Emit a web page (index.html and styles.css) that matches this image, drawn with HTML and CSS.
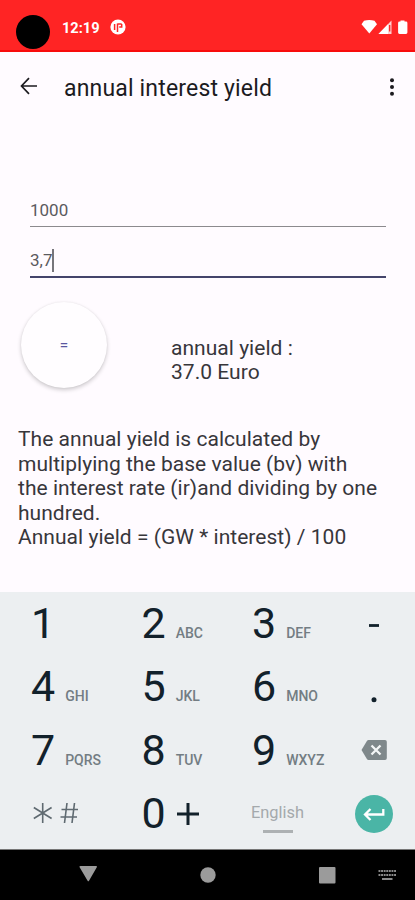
FILE: index.html
```
<!DOCTYPE html>
<html lang="en">
<head>
    <meta charset="UTF-8">
    <meta name="viewport" content="width=device-width, initial-scale=1.0">
    <title>annual interest yield</title>
    <link rel="stylesheet" href="styles.css">
</head>
<body>
    <div class="status-bar">
        <span class="camera"></span>
        <span class="clock">12:19</span>
        <svg class="app-icon" width="16" height="16" viewBox="0 0 16 16">
            <circle cx="8" cy="8" r="7.600" fill="#fff"/>
            <path d="M4.600 5v6M7.500 13V4.500M7.500 5h4.200M9.200 8h2.500V5" fill="none" stroke="#ff2424" stroke-width="1.500"/>
        </svg>
        <svg class="signals" width="48" height="16" viewBox="0 0 48 16">
            <path d="M.5 4.200L3 .8Q8.300-.8 13.500.8L16 4.200L8.300 13.500z" fill="#fff"/>
            <path d="M30.500.5v13.500H17.500z" fill="#ffd0d0"/>
            <path d="M27 4.200V14h-9.500z" fill="#fff"/>
            <path d="M28.700 5v6.500" stroke="#ff2424" stroke-width="1.300"/>
            <path d="M39.500 1.500V.5h4v1h1.500q1.400 0 1.400 1.400V12.500q0 1.400-1.400 1.400h-6.500q-1.400 0-1.400-1.400V2.900q0-1.400 1.400-1.400z" fill="#fff"/>
        </svg>
    </div>

    <header>
        <svg class="back" width="18" height="18" viewBox="0 0 18 18">
            <path d="M17 9H1.500M9 1.200L1.500 9L9 16.800" fill="none" stroke="#1c1b1f" stroke-width="1.700"/>
        </svg>
        <h1>annual interest yield</h1>
        <svg class="more" width="6" height="18" viewBox="0 0 6 18">
            <g fill="#1c1b1f">
                <circle cx="3" cy="2.200" r="2"/>
                <circle cx="3" cy="9" r="2"/>
                <circle cx="3" cy="15.800" r="2"/>
            </g>
        </svg>
    </header>

    <main>
        <div class="field">1000</div>
        <div class="field active">3,7<span class="caret"></span></div>

        <div class="result-row">
            <button class="equals">=</button>
            <p class="result">annual yield :<br>37.0 Euro</p>
        </div>

        <p class="info">The annual yield is calculated by<br>multiplying the base value (bv) with<br>the interest rate (ir)and dividing by one<br>hundred.<br>Annual yield = (GW * interest) / 100</p>
    </main>

    <div class="keyboard">
        <div class="key">1</div>
        <div class="key">2<small>ABC</small></div>
        <div class="key">3<small>DEF</small></div>
        <div class="key side">
            <svg width="12" height="40" viewBox="0 0 12 40"><path d="M1 21.500h10" stroke="#12212b" stroke-width="2.800"/></svg>
        </div>

        <div class="key">4<small>GHI</small></div>
        <div class="key">5<small>JKL</small></div>
        <div class="key">6<small>MNO</small></div>
        <div class="key side">
            <svg width="12" height="40" viewBox="0 0 12 40"><circle cx="6" cy="32.800" r="2.500" fill="#12212b"/></svg>
        </div>

        <div class="key">7<small>PQRS</small></div>
        <div class="key">8<small>TUV</small></div>
        <div class="key">9<small>WXYZ</small></div>
        <div class="key side">
            <svg width="26" height="20" viewBox="0 0 26 20">
                <path d="M7.500 0H24q1.800 0 1.800 1.800v16.400q0 1.800-1.800 1.800H7.500q-1 0-1.600-.900L.500 10L5.900.900Q6.500 0 7.500 0z" fill="#7f888b"/>
                <path d="M10.500 5.500l9 9M19.500 5.500l-9 9" stroke="#f4f6f7" stroke-width="2.300"/>
            </svg>
        </div>

        <div class="key symbols">
            <svg width="46" height="22" viewBox="0 0 46 22">
                <g fill="none" stroke="#5f6a71" stroke-width="1.600">
                    <path d="M9.700 1v20M.8 5.500l17.800 11M18.600 5.500L.8 16.500"/>
                    <path d="M34 1l-2.500 20M41.500 1l-2.500 20M28.500 7.500h16.500M27.500 15h16.500"/>
                </g>
            </svg>
        </div>
        <div class="key">0<svg class="plus" width="22" height="22" viewBox="0 0 22 22"><path d="M11 0v22M0 11h22" stroke="#12212b" stroke-width="3"/></svg></div>
        <div class="key language"><span>English</span></div>
        <div class="key side">
            <svg width="38" height="38" viewBox="0 0 38 38">
                <circle cx="19" cy="19" r="19" fill="#4ab5a6"/>
                <path d="M28.300 14v5.500H10.500M15.500 14l-5.500 5.500l5.500 5.500" fill="none" stroke="#fff" stroke-width="2.300"/>
            </svg>
        </div>
    </div>

    <nav>
        <svg width="415" height="50" viewBox="0 0 415 50">
            <g fill="#9b9b9b">
                <path d="M80.500 16h15.500q1.500 0 .8 1.300L89 30.800q-.7 1-1.400 0L79.600 17.300q-.6-1.300.9-1.300z"/>
                <circle cx="208" cy="25" r="7.700"/>
                <rect x="319" y="17" width="16.500" height="16.500" rx="1"/>
            </g>
            <g stroke="#8a8a8a" fill="none">
                <path d="M378.500 21h17.500M378.500 25h17.500" stroke-width="2.200" stroke-dasharray="1.900 .7"/>
                <path d="M382 29h10.500" stroke-width="2"/>
            </g>
        </svg>
    </nav>
</body>
</html>
```
FILE: styles.css
```
/* General Styles */
* {
    box-sizing: border-box;
}

body {
    font-family: Roboto, sans-serif;
    margin: 0;
    padding: 0;
    height: 900px;
    display: flex;
    flex-direction: column;
    overflow: hidden;
    background: #fffbff;
    color: #37363b;
}

h1, p {
    margin: 0;
    font-weight: normal;
}

svg {
    display: block;
    flex: none;
}

.status-bar {
    display: flex;
    align-items: flex-start;
    height: 52px;
    padding-left: 16px;
    background: #ff2424;
    border-bottom: 2px solid #f80c0c;
    color: #fff;
}

.camera {
    width: 34px;
    height: 34px;
    margin-top: 15px;
    border-radius: 50%;
    background: #000;
}

.clock {
    width: 48px;
    margin: 19px 0 0 12px;
    font-size: 14.6px;
    line-height: 18px;
    font-weight: 700;
}

.app-icon {
    margin-top: 19px;
}

.signals {
    margin: 20px 6px 0 auto;
}

/* Title bar */
header {
    display: flex;
    align-items: center;
    height: 70px;
    padding: 0 20px;
    color: #1c1b1f;
}

.back {
    margin-top: -2px;
}

header h1 {
    margin-left: 26px;
    font-size: 23px;
    line-height: 28px;
    letter-spacing: 0.17px;
    padding-top: 4px;
}

.more {
    margin-left: auto;
}

/* Input fields */
main {
    flex: 1;
    padding-top: 76px;
}

.field {
    display: flex;
    align-items: center;
    height: 29px;
    margin: 0 29px 0 30px;
    padding-bottom: 5px;
    border-bottom: 1.5px solid #8c8a8e;
    font-size: 17px;
    line-height: 22px;
    color: #5b5a5e;
}

.field.active {
    height: 31px;
    margin-top: 20px;
    padding-bottom: 3px;
    border-bottom: 2px solid #44446b;
}

.caret {
    width: 2px;
    height: 23px;
    background: #77767b;
}

.result-row {
    display: flex;
    margin-top: 24px;
    padding-left: 21px;
}

.equals {
    width: 86px;
    height: 86px;
    border: none;
    border-radius: 50%;
    background: #fffdff;
    box-shadow: 0 2px 4px rgba(0, 0, 0, 0.2), 0 0 2px rgba(0, 0, 0, 0.06);
    color: #5a57a0;
    font-family: inherit;
    font-size: 15px;
    font-weight: 500;
}

.result {
    margin: 33.5px 0 0 64px;
}

.result,
.info {
    font-size: 21px;
    line-height: 24.6px;
    letter-spacing: 0.03px;
}

.info {
    margin: 39px 0 0 18px;
    white-space: nowrap;
}

/* Number keyboard */
.keyboard {
    display: grid;
    grid-template-columns: 110.5px 110.5px 110.5px 1fr;
    grid-template-rows: repeat(4, 63.3px);
    height: 258px;
    border-bottom: 1px solid #777;
    background: #eceff1;
    color: #12212b;
}

.key {
    display: flex;
    align-items: baseline;
    padding-left: 31px;
    font-size: 43px;
    line-height: 63px;
}

.key small {
    margin-left: 10px;
    font-size: 14px;
    font-weight: 500;
    color: #737d83;
}

.key.side {
    align-items: center;
    justify-content: center;
    padding: 0 0 0 1px;
}

.key.symbols {
    align-items: center;
    padding: 0 0 2px 33px;
}

.plus {
    align-self: center;
    margin-left: 11px;
}

.key.language {
    align-items: center;
    padding-left: 30px;
}

.language span {
    display: flex;
    flex-direction: column;
    align-items: center;
    font-size: 16.4px;
    line-height: 20px;
    color: #a4a9ac;
    padding-top: 9px;
}

.language span::after {
    content: "";
    width: 30px;
    height: 2.5px;
    margin-top: 7px;
    background: #adb1b3;
}

/* System navigation */
nav {
    height: 50px;
    background: #000;
}
```
